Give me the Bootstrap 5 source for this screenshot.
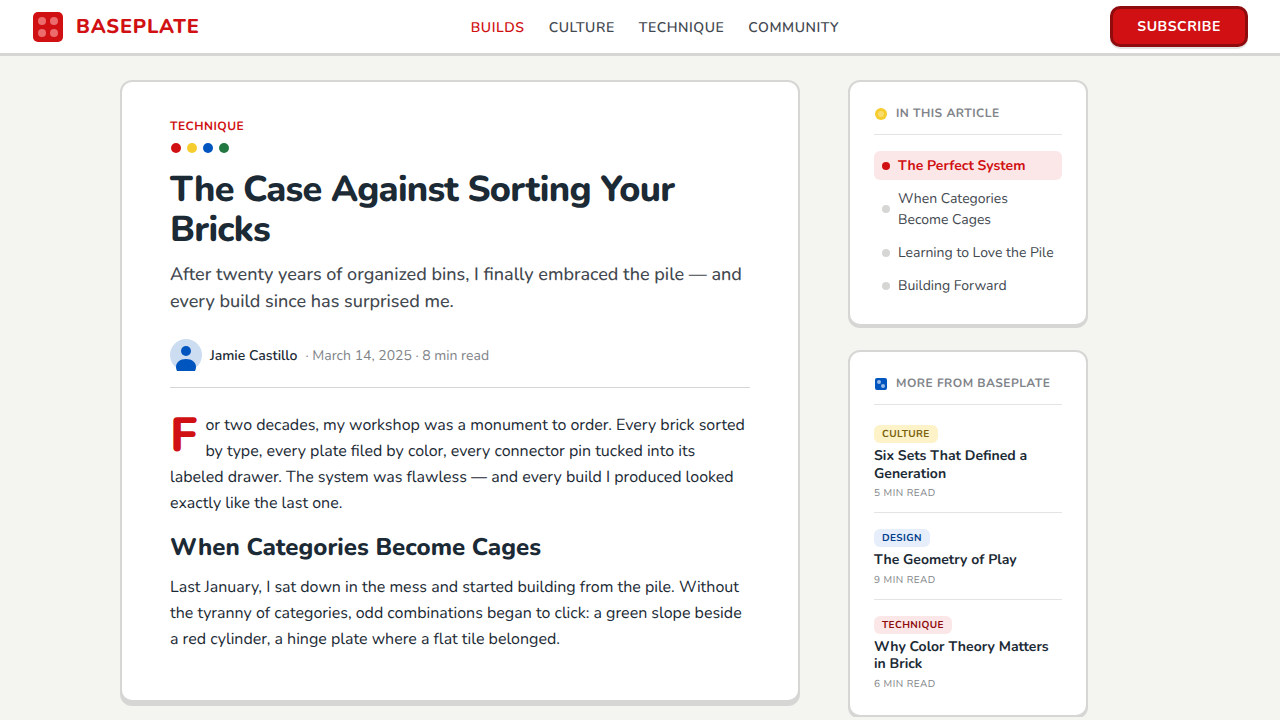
<!DOCTYPE html>
<html lang="en">
<head>
<meta charset="utf-8">
<meta name="viewport" content="width=device-width, initial-scale=1">
<title>The Case Against Sorting Your Bricks – Baseplate</title>
<link href="https://cdn.jsdelivr.net/npm/bootstrap@5.3.0/dist/css/bootstrap.min.css" rel="stylesheet">
<style>
:root{--brick-red:#d01012;--brick-dark:#8e0b0e;--ink:#1b2a35;--slate:#42484f;--muted:#7f8489;--line:#d6d7d5;--hair:#e4e5e3}
body{font-family:Nunito,"Nunito Sans",Lato,sans-serif;background:#f4f4f0;color:var(--ink);font-size:16px;line-height:26px;-webkit-font-smoothing:antialiased;text-rendering:geometricPrecision}
a{text-decoration:none;color:inherit}
.topbar{background:#fff;border-bottom:3px solid var(--line);padding:6px 32px}
.brandmark{font-size:20px;font-weight:800;letter-spacing:.8px;color:var(--brick-red);line-height:28px}
.brandmark span,.mainnav{padding-top:2px}
.mainnav{gap:24px;font-size:14px;font-weight:600;letter-spacing:.56px;color:var(--slate)}
.mainnav .active{color:var(--brick-red)}
.btn-brick{--bs-btn-color:#fff;--bs-btn-bg:var(--brick-red);--bs-btn-border-color:var(--brick-dark);--bs-btn-hover-color:#fff;--bs-btn-hover-bg:#b80e10;--bs-btn-hover-border-color:var(--brick-dark);border-width:3px;border-radius:10px;padding:7px 24px;font-size:14px;font-weight:700;letter-spacing:.56px;line-height:21px;box-shadow:0 2px 0 #e4e5e3}
.page{max-width:1040px;gap:48px;padding-top:24px}
.panel{background:#fff;border:2px solid var(--line);border-radius:12px;box-shadow:0 2px 0 var(--line)}
.story{flex:0 1 680px;padding:37px 48px 48px;box-shadow:0 4px 0 var(--line)}
.rail{flex:0 0 240px;gap:24px}
.rail .panel{padding:23px 24px 24px}
.eyebrow{font-size:12px;font-weight:700;letter-spacing:.48px;line-height:16px;color:var(--brick-red);margin-bottom:7px}
h1{font-size:36px;font-weight:800;line-height:40px;letter-spacing:-.72px;margin:16px 0 12px}
.deck{font-size:18px;font-weight:500;line-height:27px;color:var(--slate);margin-bottom:23px}
.byline{font-size:14px;line-height:21px;color:var(--muted);padding-bottom:16px;border-bottom:1px solid var(--line);margin-bottom:24px}
.byline strong{font-weight:600;color:var(--ink)}
.opening{margin-bottom:17px}
.opening::first-letter{float:left;font-size:48px;font-weight:800;line-height:46px;color:var(--brick-red);margin-right:8px}
h2{font-size:24px;font-weight:800;line-height:30px;margin-bottom:11px}
.railhead{font-size:12px;font-weight:700;letter-spacing:.48px;line-height:18px;color:var(--muted);padding-bottom:11px;border-bottom:1px solid var(--hair);margin:0}
.toc{gap:4px;margin-top:16px;font-size:14px;line-height:21px;color:var(--slate)}
.toc a{padding:4px 8px;gap:8px;border-radius:6px}
.toc a::before{content:"";flex:none;width:8px;height:8px;border-radius:50%;background:var(--line)}
.toc .active{background:#fce7e8;color:var(--brick-red);font-weight:700}
.toc .active::before{background:var(--brick-red)}
.teasers{padding-top:4px}
.teaser{padding:16px 0 12px;border-bottom:1px solid var(--hair)}
.teaser:last-child{border:0;padding-bottom:0}
.chip{display:block;width:fit-content;border-radius:6px;padding:0 8px;font-size:10px;font-weight:700;letter-spacing:.4px;line-height:18px}
.chip-yellow{background:#fdf2c8;color:#7a6210}
.chip-blue{background:#e5eefa;color:#003d8a}
.chip-red{background:#fce7e8;color:var(--brick-dark)}
.teaser h3{font-size:14px;font-weight:700;line-height:1.25;margin:4px 0}
.readtime{font-size:10px;line-height:14px;letter-spacing:.5px;color:var(--muted)}
</style>
</head>
<body>
<header class="topbar d-flex align-items-center justify-content-between">
  <a href="#" class="brandmark d-flex align-items-center gap-2">
    <svg width="32" height="32" viewBox="0 0 32 32" class="me-1" aria-hidden="true"><rect x="1" y="1" width="30" height="30" rx="5" fill="#d01012"/><g fill="#ec6c6e"><circle cx="10" cy="10" r="4"/><circle cx="22" cy="10" r="4"/><circle cx="10" cy="22" r="4"/><circle cx="22" cy="22" r="4"/></g></svg><span>BASEPLATE</span></a>
  <nav class="mainnav d-flex" aria-label="Main">
    <a href="#" class="active" aria-current="page">BUILDS</a><a href="#">CULTURE</a><a href="#">TECHNIQUE</a><a href="#">COMMUNITY</a>
  </nav>
  <button type="button" class="btn btn-brick">SUBSCRIBE</button>
</header>
<main class="page mx-auto d-flex align-items-start">
  <article class="panel story">
    <div class="eyebrow">TECHNIQUE</div>
    <svg class="d-block" width="60" height="12" aria-hidden="true"><circle cx="6" cy="6" r="5" fill="#d01012"/><circle cx="22" cy="6" r="5" fill="#f5cd2f"/><circle cx="38" cy="6" r="5" fill="#0055bf"/><circle cx="54" cy="6" r="5" fill="#237841"/></svg>
    <h1>The Case Against Sorting Your Bricks</h1>
    <p class="deck">After twenty years of organized bins, I finally embraced the pile — and every build since has surprised me.</p>
    <div class="byline d-flex align-items-center gap-2">
      <svg width="32" height="32" viewBox="0 0 32 32" aria-hidden="true"><circle cx="16" cy="16" r="16" fill="#ccddf2"/><circle cx="16" cy="12" r="5" fill="#0055bf"/><path d="M7 32Q6 30 6 28C6 23.500 10 20 16 20s10 3.500 10 8q0 2-1 4z" fill="#0055bf"/></svg>
      <strong>Jamie Castillo</strong><span>· March 14, 2025 · 8 min read</span>
    </div>
    <p class="opening">For two decades, my workshop was a monument to order. Every brick sorted by type, every plate filed by color, every connector pin tucked into its labeled drawer. The system was flawless — and every build I produced looked exactly like the last one.</p>
    <h2>When Categories Become Cages</h2>
    <p class="mb-0">Last January, I sat down in the mess and started building from the pile. Without the tyranny of categories, odd combinations began to click: a green slope beside a red cylinder, a hinge plate where a flat tile belonged.</p>
  </article>
  <aside class="rail d-flex flex-column">
    <section class="panel">
      <h2 class="railhead d-flex align-items-center gap-2"><svg width="14" height="14" aria-hidden="true"><circle cx="7" cy="7" r="6" fill="#f5cd2f"/><circle cx="7" cy="7" r="3" fill="#f8dc6d"/></svg>IN THIS ARTICLE</h2>
      <nav class="toc d-flex flex-column" aria-label="In this article">
        <a href="#" class="d-flex align-items-center active">The Perfect System</a>
        <a href="#" class="d-flex align-items-center">When Categories Become Cages</a>
        <a href="#" class="d-flex align-items-center">Learning to Love the Pile</a>
        <a href="#" class="d-flex align-items-center">Building Forward</a>
      </nav>
    </section>
    <section class="panel">
      <h2 class="railhead d-flex align-items-center gap-2"><svg width="14" height="14" aria-hidden="true"><rect x="1" y="1" width="12" height="12" rx="2" fill="#0055bf"/><g fill="#99bbe5"><circle cx="5" cy="5" r="2"/><circle cx="9" cy="9" r="2"/></g></svg>MORE FROM BASEPLATE</h2>
      <div class="teasers">
        <div class="teaser"><span class="chip chip-yellow">CULTURE</span><h3><a href="#">Six Sets That Defined a Generation</a></h3><div class="readtime">5 MIN READ</div></div>
        <div class="teaser"><span class="chip chip-blue">DESIGN</span><h3><a href="#">The Geometry of Play</a></h3><div class="readtime">9 MIN READ</div></div>
        <div class="teaser"><span class="chip chip-red">TECHNIQUE</span><h3><a href="#">Why Color Theory Matters in Brick</a></h3><div class="readtime">6 MIN READ</div></div>
      </div>
    </section>
  </aside>
</main>
<script src="https://cdn.jsdelivr.net/npm/bootstrap@5.3.0/dist/js/bootstrap.bundle.min.js"></script>
</body>
</html>
